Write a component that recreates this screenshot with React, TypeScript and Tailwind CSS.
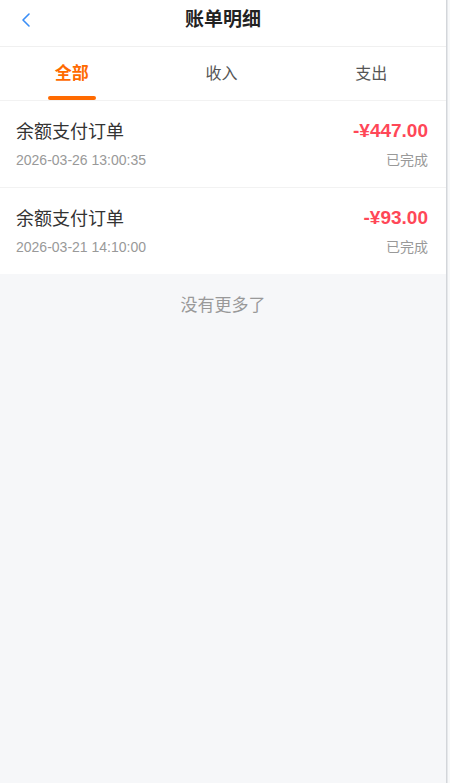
import React from 'react';

const records = [
  { title: '余额支付订单', time: '2026-03-26 13:00:35', amount: '-¥447.00', status: '已完成' },
  { title: '余额支付订单', time: '2026-03-21 14:10:00', amount: '-¥93.00', status: '已完成' },
];

export default function App() {
  const tabs = ['全部', '收入', '支出'];
  return (
    <div className="flex h-[783px] w-[450px] overflow-hidden font-['Liberation_Sans','Noto_Sans_CJK_SC',sans-serif]">
      <div className="flex w-[446px] flex-col bg-[#f6f7f9]">
        {/* Header */}
        <div className="relative flex h-[47px] items-center justify-center border-b border-[#f0f0f0] bg-white">
          <svg className="absolute left-[20px] top-[12px]" width="12" height="16" viewBox="0 0 12 16" fill="none">
            <path d="M9 2L3 8l6 6" stroke="#3a8ef6" strokeWidth="1.6" strokeLinecap="round" strokeLinejoin="round" />
          </svg>
          <h1 className="-mt-[6px] text-[19px] font-bold text-[#222]">账单明细</h1>
        </div>

        {/* Tabs */}
        <div className="flex h-[54px] border-b border-[#f2f2f2] bg-white -ml-[3px]">
          {tabs.map((t, i) => (
            <div key={t} className="relative flex w-[150px] items-center justify-center">
              <span
                className={
                  i === 0
                    ? 'text-[17px] font-bold text-[#ff6a00]'
                    : 'text-[16px] text-[#555]'
                }
              >
                {t}
              </span>
              {i === 0 && (
                <div className="absolute bottom-[0px] left-[51px] h-[4px] w-[48px] rounded-full bg-[#ff6a00]" />
              )}
            </div>
          ))}
        </div>

        {/* List */}
        <div className="bg-white">
          {records.map((r, i) => (
            <div
              key={i}
              className={`flex justify-between pl-[16px] pr-[18px] pt-[19px] pb-[17px] ${i === 0 ? 'border-b border-[#f2f2f2]' : ''}`}
            >
              <div className="flex flex-col gap-[6px]">
                <span className="text-[18px] leading-[24px] text-[#333]">{r.title}</span>
                <span className="text-[14px] leading-[20px] text-[#999]">{r.time}</span>
              </div>
              <div className="flex flex-col items-end gap-[8px]">
                <span className="text-[19px] leading-[22px] font-bold text-[#ff4757]">{r.amount}</span>
                <span className="text-[14px] leading-[20px] text-[#999]">{r.status}</span>
              </div>
            </div>
          ))}
        </div>

        <div className="pt-[21px] text-center text-[17px] leading-[22px] text-[#999]">没有更多了</div>
      </div>
      <div className="w-[1px] bg-[#d3d6da]" />
      <div className="w-[1px] bg-[#e6e8eb]" />
      <div className="flex-1 bg-[#f8f9fa]" />
    </div>
  );
}
